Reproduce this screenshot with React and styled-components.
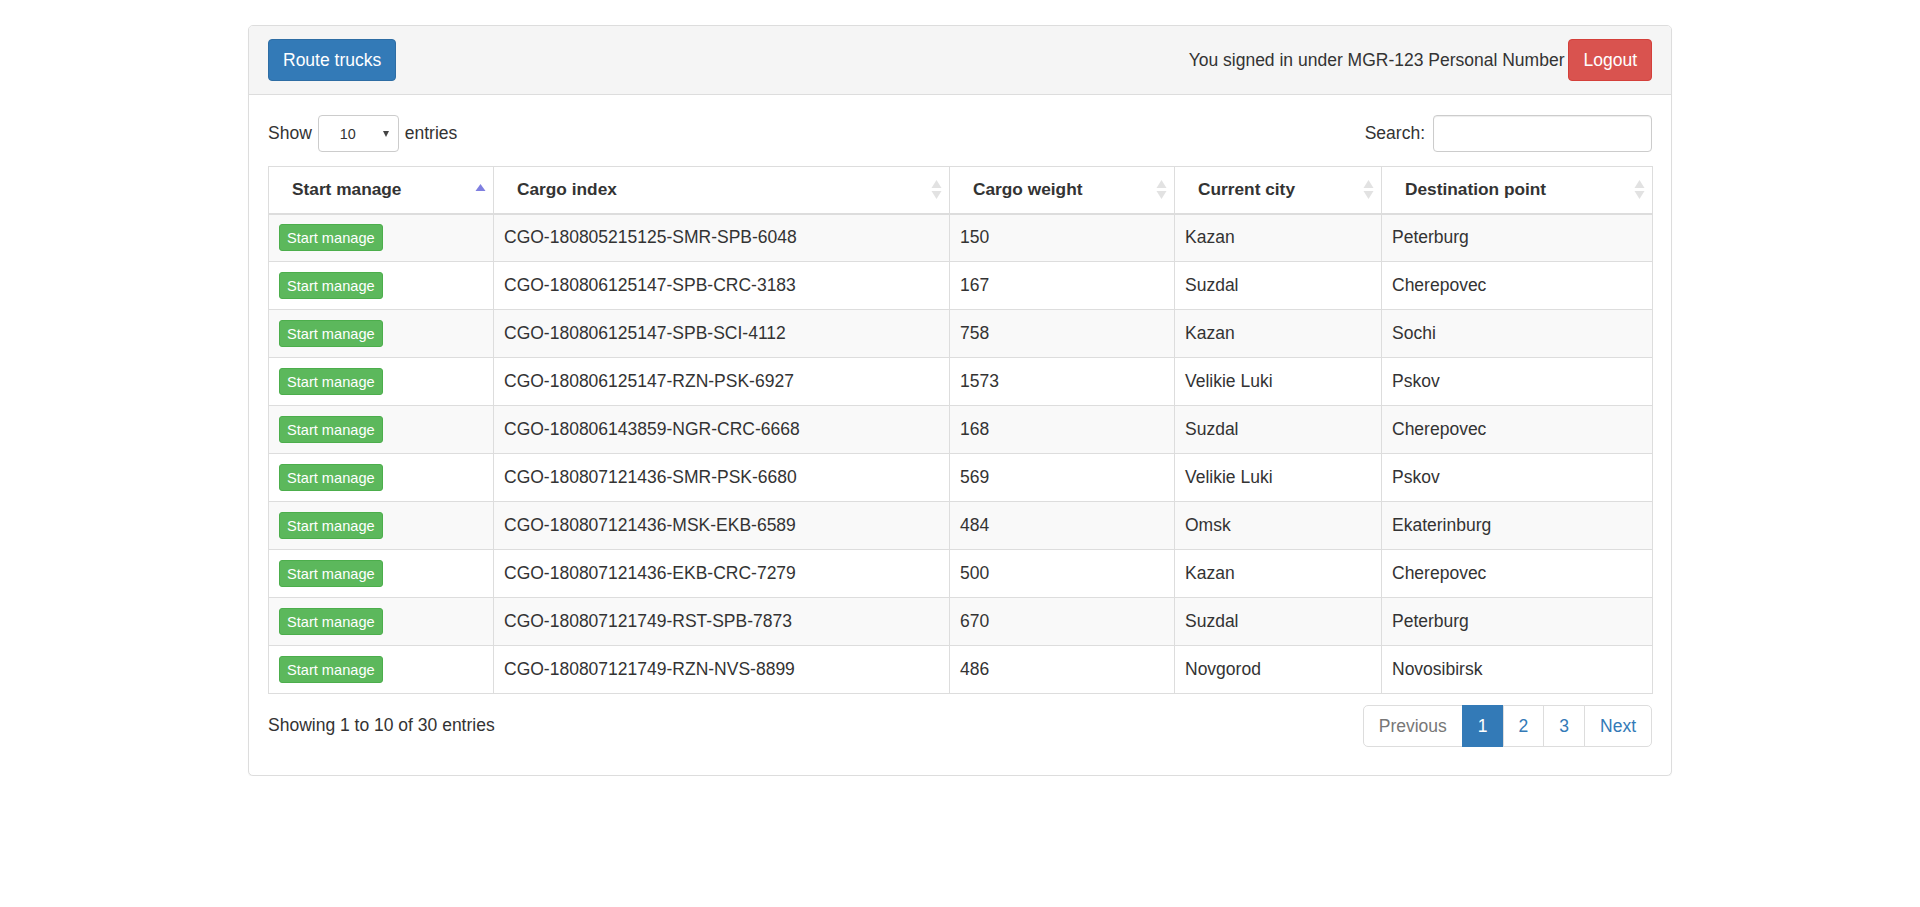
import React from 'react'
import styled, { createGlobalStyle } from 'styled-components'

const GlobalStyle = createGlobalStyle`
body{
  margin: 0;
  background: #fff;
  font-family: "Liberation Sans", Arial, sans-serif;
  font-size: 17.5px;
  color: #333;
}
*{ box-sizing: border-box; }
`

const Panel = styled.div`
width: 1424px;
margin: 25px auto 0;
border: 1px solid #ddd;
border-radius: 5px;
background: #fff;
box-shadow: 0 1px 1px rgba(0,0,0,0.05);
`

const Heading = styled.div`
display: flex;
justify-content: space-between;
align-items: center;
padding: 13px 19px 13px;
background: #f5f5f5;
border-bottom: 1px solid #ddd;
border-radius: 4px 4px 0 0;
`

const UserBox = styled.div`
display: flex;
align-items: center;
gap: 4px;
`

const Btn = styled.button`
font-family: inherit;
font-size: 17.5px;
line-height: 24px;
height: 42px;
padding: 8px ${p => p.$px || 15}px;
color: #fff;
border-radius: 4px;
border: 1px solid ${p => p.$border};
background: ${p => p.$bg};
cursor: pointer;
`

const Body = styled.div`
padding: 20px 19px 28px;
`

const Controls = styled.div`
display: flex;
justify-content: space-between;
align-items: center;
margin-bottom: 14px;
`

const Label = styled.label`
display: flex;
align-items: center;
gap: 6px;
`

const SelectWrap = styled.span`
position: relative;
display: inline-block;
&::after{
  content: '';
  position: absolute;
  right: 10px;
  top: 16px;
  border-left: 3.5px solid transparent;
  border-right: 3.5px solid transparent;
  border-top: 6px solid #444;
  pointer-events: none;
}
`

const Select = styled.select`
appearance: none;
width: 81px;
height: 37px;
padding: 0 0 0 21px;
font-family: inherit;
font-size: 14.4px;
color: #333;
background: #fff;
border: 1px solid #ccc;
border-radius: 4px;
`

const SearchInput = styled.input`
width: 219px;
height: 37px;
margin-left: 2px;
border: 1px solid #ccc;
border-radius: 4px;
box-shadow: inset 0 1px 1px rgba(0,0,0,0.075);
`

const Table = styled.table`
width: 100%;
border-collapse: collapse;
border: 1px solid #ddd;
table-layout: fixed;
`

const Th = styled.th`
height: 47px;
padding: 0 7px 0 23px;
text-align: left;
font-weight: bold;
font-size: 17.3px;
border: 1px solid #ddd;
border-bottom: 2px solid #ddd;
`

const ThInner = styled.div`
display: flex;
justify-content: space-between;
align-items: center;
`

const Tr = styled.tr`
background: ${p => p.$odd ? '#f9f9f9' : '#fff'};
`

const Td = styled.td`
height: 48px;
padding: 0 10px;
border: 1px solid #ddd;
white-space: nowrap;
`

const ManageBtn = styled.button`
font-family: inherit;
font-size: 14.6px;
height: 27px;
padding: 0 7px;
color: #fff;
background: #5cb85c;
border: 1px solid #4cae4c;
border-radius: 3px;
`

const Footer = styled.div`
display: flex;
justify-content: space-between;
align-items: flex-start;
margin-top: 11px;
`

const Info = styled.div`
padding-top: 10px;
`

const Pager = styled.ul`
display: flex;
list-style: none;
margin: 0;
padding: 0;
`

const PageItem = styled.li`
height: 42px;
line-height: 40px;
padding: 0 ${p => p.$px}px;
border: 1px solid ${p => p.$active ? '#337ab7' : '#ddd'};
margin-left: -1px;
color: ${p => p.$active ? '#fff' : p.$disabled ? '#777' : '#337ab7'};
background: ${p => p.$active ? '#337ab7' : '#fff'};
&:first-child{ margin-left: 0; border-radius: 5px 0 0 5px; }
&:last-child{ border-radius: 0 5px 5px 0; }
`

const SortIcon = ({ asc }) => asc ? (
    <svg width="11" height="19" viewBox="0 0 11 19">
        <polygon points="5.5,4 10.5,11 0.5,11" fill="#7f7fe0" />
    </svg>
) : (
    <svg width="11" height="19" viewBox="0 0 11 19">
        <polygon points="5.5,0 10.5,8 0.5,8" fill="#e2e2e2" />
        <polygon points="5.5,19 10.5,11 0.5,11" fill="#e2e2e2" />
    </svg>
)

const columns = [
    { title: 'Start manage', width: 225, asc: true },
    { title: 'Cargo index', width: 456 },
    { title: 'Cargo weight', width: 225 },
    { title: 'Current city', width: 207 },
    { title: 'Destination point', width: 271 },
]

const rows = [
    ['CGO-180805215125-SMR-SPB-6048', '150', 'Kazan', 'Peterburg'],
    ['CGO-180806125147-SPB-CRC-3183', '167', 'Suzdal', 'Cherepovec'],
    ['CGO-180806125147-SPB-SCI-4112', '758', 'Kazan', 'Sochi'],
    ['CGO-180806125147-RZN-PSK-6927', '1573', 'Velikie Luki', 'Pskov'],
    ['CGO-180806143859-NGR-CRC-6668', '168', 'Suzdal', 'Cherepovec'],
    ['CGO-180807121436-SMR-PSK-6680', '569', 'Velikie Luki', 'Pskov'],
    ['CGO-180807121436-MSK-EKB-6589', '484', 'Omsk', 'Ekaterinburg'],
    ['CGO-180807121436-EKB-CRC-7279', '500', 'Kazan', 'Cherepovec'],
    ['CGO-180807121749-RST-SPB-7873', '670', 'Suzdal', 'Peterburg'],
    ['CGO-180807121749-RZN-NVS-8899', '486', 'Novgorod', 'Novosibirsk'],
]

const App = () => {
    return (
        <>
            <GlobalStyle />
            <Panel>
                <Heading>
                    <Btn $bg="#337ab7" $border="#2e6da4" $px={14}>Route trucks</Btn>
                    <UserBox>
                        <span>You signed in under MGR-123 Personal Number</span>
                        <Btn $bg="#d9534f" $border="#d43f3a" $px={14}>Logout</Btn>
                    </UserBox>
                </Heading>
                <Body>
                    <Controls>
                        <Label>
                            Show
                            <SelectWrap>
                                <Select defaultValue="10">
                                    <option>10</option>
                                    <option>25</option>
                                    <option>50</option>
                                    <option>100</option>
                                </Select>
                            </SelectWrap>
                            entries
                        </Label>
                        <Label>
                            Search:
                            <SearchInput type="search" />
                        </Label>
                    </Controls>
                    <Table>
                        <colgroup>
                            {columns.map(c => <col key={c.title} style={{ width: c.width }} />)}
                        </colgroup>
                        <thead>
                            <tr>
                                {columns.map(c => (
                                    <Th key={c.title}>
                                        <ThInner>
                                            <span>{c.title}</span>
                                            <SortIcon asc={c.asc} />
                                        </ThInner>
                                    </Th>
                                ))}
                            </tr>
                        </thead>
                        <tbody>
                            {rows.map((r, i) => (
                                <Tr key={r[0]} $odd={i % 2 === 0}>
                                    <Td><ManageBtn>Start manage</ManageBtn></Td>
                                    {r.map((v, j) => <Td key={j}>{v}</Td>)}
                                </Tr>
                            ))}
                        </tbody>
                    </Table>
                    <Footer>
                        <Info>Showing 1 to 10 of 30 entries</Info>
                        <Pager>
                            <PageItem $px={15} $disabled>Previous</PageItem>
                            <PageItem $px={15} $active>1</PageItem>
                            <PageItem $px={15}>2</PageItem>
                            <PageItem $px={15}>3</PageItem>
                            <PageItem $px={15}>Next</PageItem>
                        </Pager>
                    </Footer>
                </Body>
            </Panel>
        </>
    )
}

export default App
